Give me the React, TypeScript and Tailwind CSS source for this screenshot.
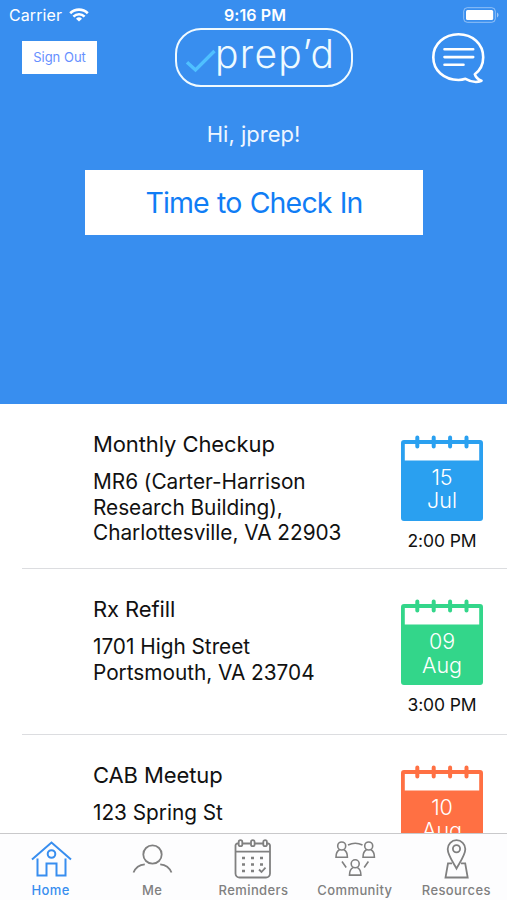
import type { ReactNode } from "react";

type Appointment = {
  title: string;
  lines: string[];
  day: string;
  month: string;
  time: string;
  color: string;
};

const appointments: Appointment[] = [
  {
    title: "Monthly Checkup",
    lines: ["MR6 (Carter-Harrison", "Research Building),", "Charlottesville, VA 22903"],
    day: "15",
    month: "Jul",
    time: "2:00 PM",
    color: "text-[#2aa0f0]",
  },
  {
    title: "Rx Refill",
    lines: ["1701 High Street", "Portsmouth, VA 23704"],
    day: "09",
    month: "Aug",
    time: "3:00 PM",
    color: "text-[#33d68a]",
  },
  {
    title: "CAB Meetup",
    lines: ["123 Spring St"],
    day: "10",
    month: "Aug",
    time: "",
    color: "text-[#ff7043]",
  },
];

function StatusBar() {
  return (
    <div className="grid h-7 shrink-0 grid-cols-3 items-center pt-[2px] pr-[7px] pl-[9px] text-white">
      <div className="flex items-center gap-[7px]">
        <span className="text-[16px] leading-5 tracking-[0.1px]">Carrier</span>
        <svg width="20" height="14" viewBox="0 0 20 14" fill="none" stroke="currentColor" strokeWidth="2.6">
          <path d="M1.2 5.2a12.6 12.6 0 0 1 17.6 0" />
          <path d="M4.4 8.6a8 8 0 0 1 11.2 0" />
          <path d="M10 13.6 7 10.7a4.3 4.3 0 0 1 6 0Z" fill="currentColor" stroke="none" />
        </svg>
      </div>
      <span className="pl-[1px] text-center text-[16px] leading-5 font-semibold tracking-[0.1px]">9:16 PM</span>
      <svg className="justify-self-end" width="37" height="16" viewBox="0 0 37 16" fill="none">
        <rect x="0.7" y="0.7" width="31.6" height="14.6" rx="3.6" stroke="white" strokeOpacity="0.45" />
        <rect x="3" y="3" width="27.2" height="10" rx="1.5" fill="white" />
        <path d="M34 5.600C36 6.300 36 9.700 34 10.400Z" fill="white" fillOpacity="0.5" />
      </svg>
    </div>
  );
}

function Logo() {
  return (
    <div className="flex h-[59px] w-[178px] items-start rounded-[26px] border-2 border-[#f0faff] pl-[8px]">
      <svg className="mt-[19px] shrink-0" width="31" height="25" viewBox="0 0 31 25" fill="none">
        <path d="M2 13.200 10.500 21 29.500 2" stroke="#4fc0ff" strokeWidth="3.4" />
      </svg>
      <span className="ml-[-1px] text-[39px] leading-[48px] font-light tracking-[1.300px] whitespace-nowrap text-[#eefaff]">
        prep’d
      </span>
    </div>
  );
}

function ChatIcon() {
  return (
    <svg width="54" height="52" viewBox="0 0 54 52" fill="none" stroke="white" strokeWidth="2.6" strokeLinecap="round" strokeLinejoin="round">
      <path d="M34.500 46.800C41 50.500 47 50.300 50.500 48.700C46.500 47.300 44.500 44.800 43.800 42.200C49 38.500 52.200 32.500 52.200 25.300C52.200 11.800 41.500 2.300 27.500 2.300S2.300 12 2.300 25.200S13 48 27.500 48C30 48 32.300 47.600 34.500 46.800Z" />
      <path d="M13.500 17.300H42.200M13.500 25.100H42.200M13.500 32.700H32.500" />
    </svg>
  );
}

function CalendarBadge({ day, month, color }: { day: string; month: string; color: string }) {
  return (
    <div className={`relative h-[86px] w-[82px] ${color}`}>
      <svg className="absolute inset-0" width="82" height="86" viewBox="0 0 82 86" fill="none">
        <path
          fill="currentColor"
          fillRule="evenodd"
          d="M3 5H79a3 3 0 0 1 3 3V83a3 3 0 0 1-3 3H3a3 3 0 0 1-3-3V8a3 3 0 0 1 3-3ZM3.800 9V25.500H78.200V9Z"
        />
        <path d="M16.300 2.500V11.500M32.700 2.500V11.500M49.100 2.500V11.500M65.500 2.500V11.500" stroke="currentColor" strokeWidth="4" strokeLinecap="round" />
      </svg>
      <div className="relative pt-[31px] text-center text-[21.500px] leading-[23.300px] font-light text-white">
        <div>{day}</div>
        <div>{month}</div>
      </div>
    </div>
  );
}

function AppointmentRow({ item, first }: { item: Appointment; first: boolean }) {
  return (
    <li className={`flex shrink-0 pl-[22px] ${first ? "h-[164.400px]" : "h-[165.300px]"}`}>
      <div className={`flex grow pl-[71px] ${first ? "" : "border-t border-[#dcdde0]"}`}>
        <div className="grow pt-[27px]">
          <h2 className="text-[22px] leading-[26px] tracking-[-0.1px]">{item.title}</h2>
          <div className="mt-[12px] text-[20.800px] leading-[25.700px] tracking-[-0.020px]">
            {item.lines.map((line) => (
              <p key={line} className="whitespace-nowrap">{line}</p>
            ))}
          </div>
        </div>
        <div className={`mr-[24px] flex w-[82px] shrink-0 flex-col items-center ${first ? "pt-[31px]" : "pt-[30px]"}`}>
          <CalendarBadge day={item.day} month={item.month} color={item.color} />
          {item.time && (
            <span className="mt-[9px] text-[17.500px] leading-[22px] tracking-[-0.100px] whitespace-nowrap">{item.time}</span>
          )}
        </div>
      </div>
    </li>
  );
}

function TabIcon({ children }: { children: ReactNode }) {
  return (
    <svg width="44" height="44" viewBox="0 0 44 44" fill="none" stroke="currentColor" strokeWidth="1.8">
      {children}
    </svg>
  );
}

const tabs = [
  {
    label: "Home",
    icon: (
      <TabIcon>
        <path d="M3 23.500 22.500 6.500 42 23.500" strokeWidth="2" />
        <path d="M8.500 22.500V39.500H17.500V27.500H27.500V39.500H36.500V22.500" strokeWidth="2" />
        <circle cx="22.500" cy="18" r="3.800" strokeWidth="2" />
      </TabIcon>
    ),
  },
  {
    label: "Me",
    icon: (
      <TabIcon>
        <circle cx="22.500" cy="18.500" r="9.200" />
        <path d="M3.500 36.500C5.500 31.500 9.500 28.800 14.800 28.300M41.500 36.500C39.500 31.500 35.500 28.800 30.200 28.300" />
      </TabIcon>
    ),
  },
  {
    label: "Reminders",
    icon: (
      <TabIcon>
        <path d="M7.500 7.500H6.500a2 2 0 0 0-2 2V37.500a4 4 0 0 0 4 4H35a4 4 0 0 0 4-4V9.500a2 2 0 0 0-2-2H36M11.500 7.500H19.500M24 7.500H32M4.500 15.700H39" />
        <rect x="7.700" y="4.200" width="3.600" height="6" rx="1.800" />
        <rect x="20" y="4.200" width="3.600" height="6" rx="1.800" />
        <rect x="32.300" y="4.200" width="3.600" height="6" rx="1.800" />
        <path d="M11 22h3M20 22h3M29 22h3M11 28.500h3M20 28.500h3M29 28.500h3M11 35h3M20 35h3" strokeWidth="2.500" />
        <path d="M28 33.500 30.500 36 34.500 31.700" />
      </TabIcon>
    ),
  },
  {
    label: "Community",
    icon: (
      <TabIcon>
        <g strokeWidth="1.600">
          <circle cx="8.700" cy="10" r="4" />
          <path d="M6.500 13.800C4 15 3 17 3 21.300H14.400C14.400 17 13.400 15 10.900 13.800" />
          <circle cx="35.700" cy="10" r="4" />
          <path d="M33.500 13.800C31 15 30 17 30 21.300H41.400C41.400 17 40.400 15 37.900 13.800" />
          <circle cx="22.200" cy="27.800" r="4" />
          <path d="M20 31.600C17.500 32.800 16.500 35 16.500 39.100H27.900C27.900 35 26.900 32.800 24.400 31.600" />
          <path d="M15 9C19.500 6.800 25 6.800 29.500 9M9 25.500 13.200 31.500M35.400 25.500 31.200 31.500" />
        </g>
      </TabIcon>
    ),
  },
  {
    label: "Resources",
    icon: (
      <TabIcon>
        <path d="M22.500 32.500C19 26 13.700 19 13.700 13a8.800 8.800 0 0 1 17.600 0C31.300 19 26 26 22.500 32.500Z" />
        <circle cx="22.500" cy="12.800" r="3.600" />
        <path d="M18 27.300H14L11.500 41.500H33.700L31.200 27.300H27" />
      </TabIcon>
    ),
  },
];

export default function App() {
  return (
    <main className="flex h-[900px] w-[507px] flex-col overflow-hidden bg-white font-[Inter,'Liberation_Sans',sans-serif] text-[#111]">
      <header className="flex h-[404px] shrink-0 flex-col bg-[#388eef]">
        <StatusBar />
        <div className="flex h-[60px] items-start pr-[22px] pl-[22px]">
          <button className="mt-[13px] mr-[78px] h-[33px] w-[75px] bg-white text-[13px] text-[#668fff]">Sign Out</button>
          <Logo />
          <div className="mt-[4px] ml-auto">
            <ChatIcon />
          </div>
        </div>
        <p className="mt-[32px] text-center text-[22px] leading-[28px] text-[#eef6ff]">Hi, jprep!</p>
        <button className="mt-[22px] ml-[85px] h-[65px] w-[338px] bg-white pt-[2px] text-[28.500px] tracking-[-0.850px] text-[#107df5] [word-spacing:1px]">
          Time to Check In
        </button>
      </header>
      <ul className="flex min-h-0 flex-1 flex-col overflow-hidden">
        {appointments.map((item, i) => (
          <AppointmentRow key={item.title} item={item} first={i === 0} />
        ))}
      </ul>
      <nav className="grid h-[67px] shrink-0 grid-cols-5 border-t border-[#c9c9cb] bg-[#fdfdfe]">
        {tabs.map((tab, i) => (
          <div key={tab.label} className={`flex flex-col items-center pt-[2px] ${i === 0 ? "text-[#388eef]" : "text-[#808080]"}`}>
            {tab.icon}
            <span className="mt-[2px] text-[13px] leading-[16px] font-medium tracking-[0.4px]">{tab.label}</span>
          </div>
        ))}
      </nav>
    </main>
  );
}
